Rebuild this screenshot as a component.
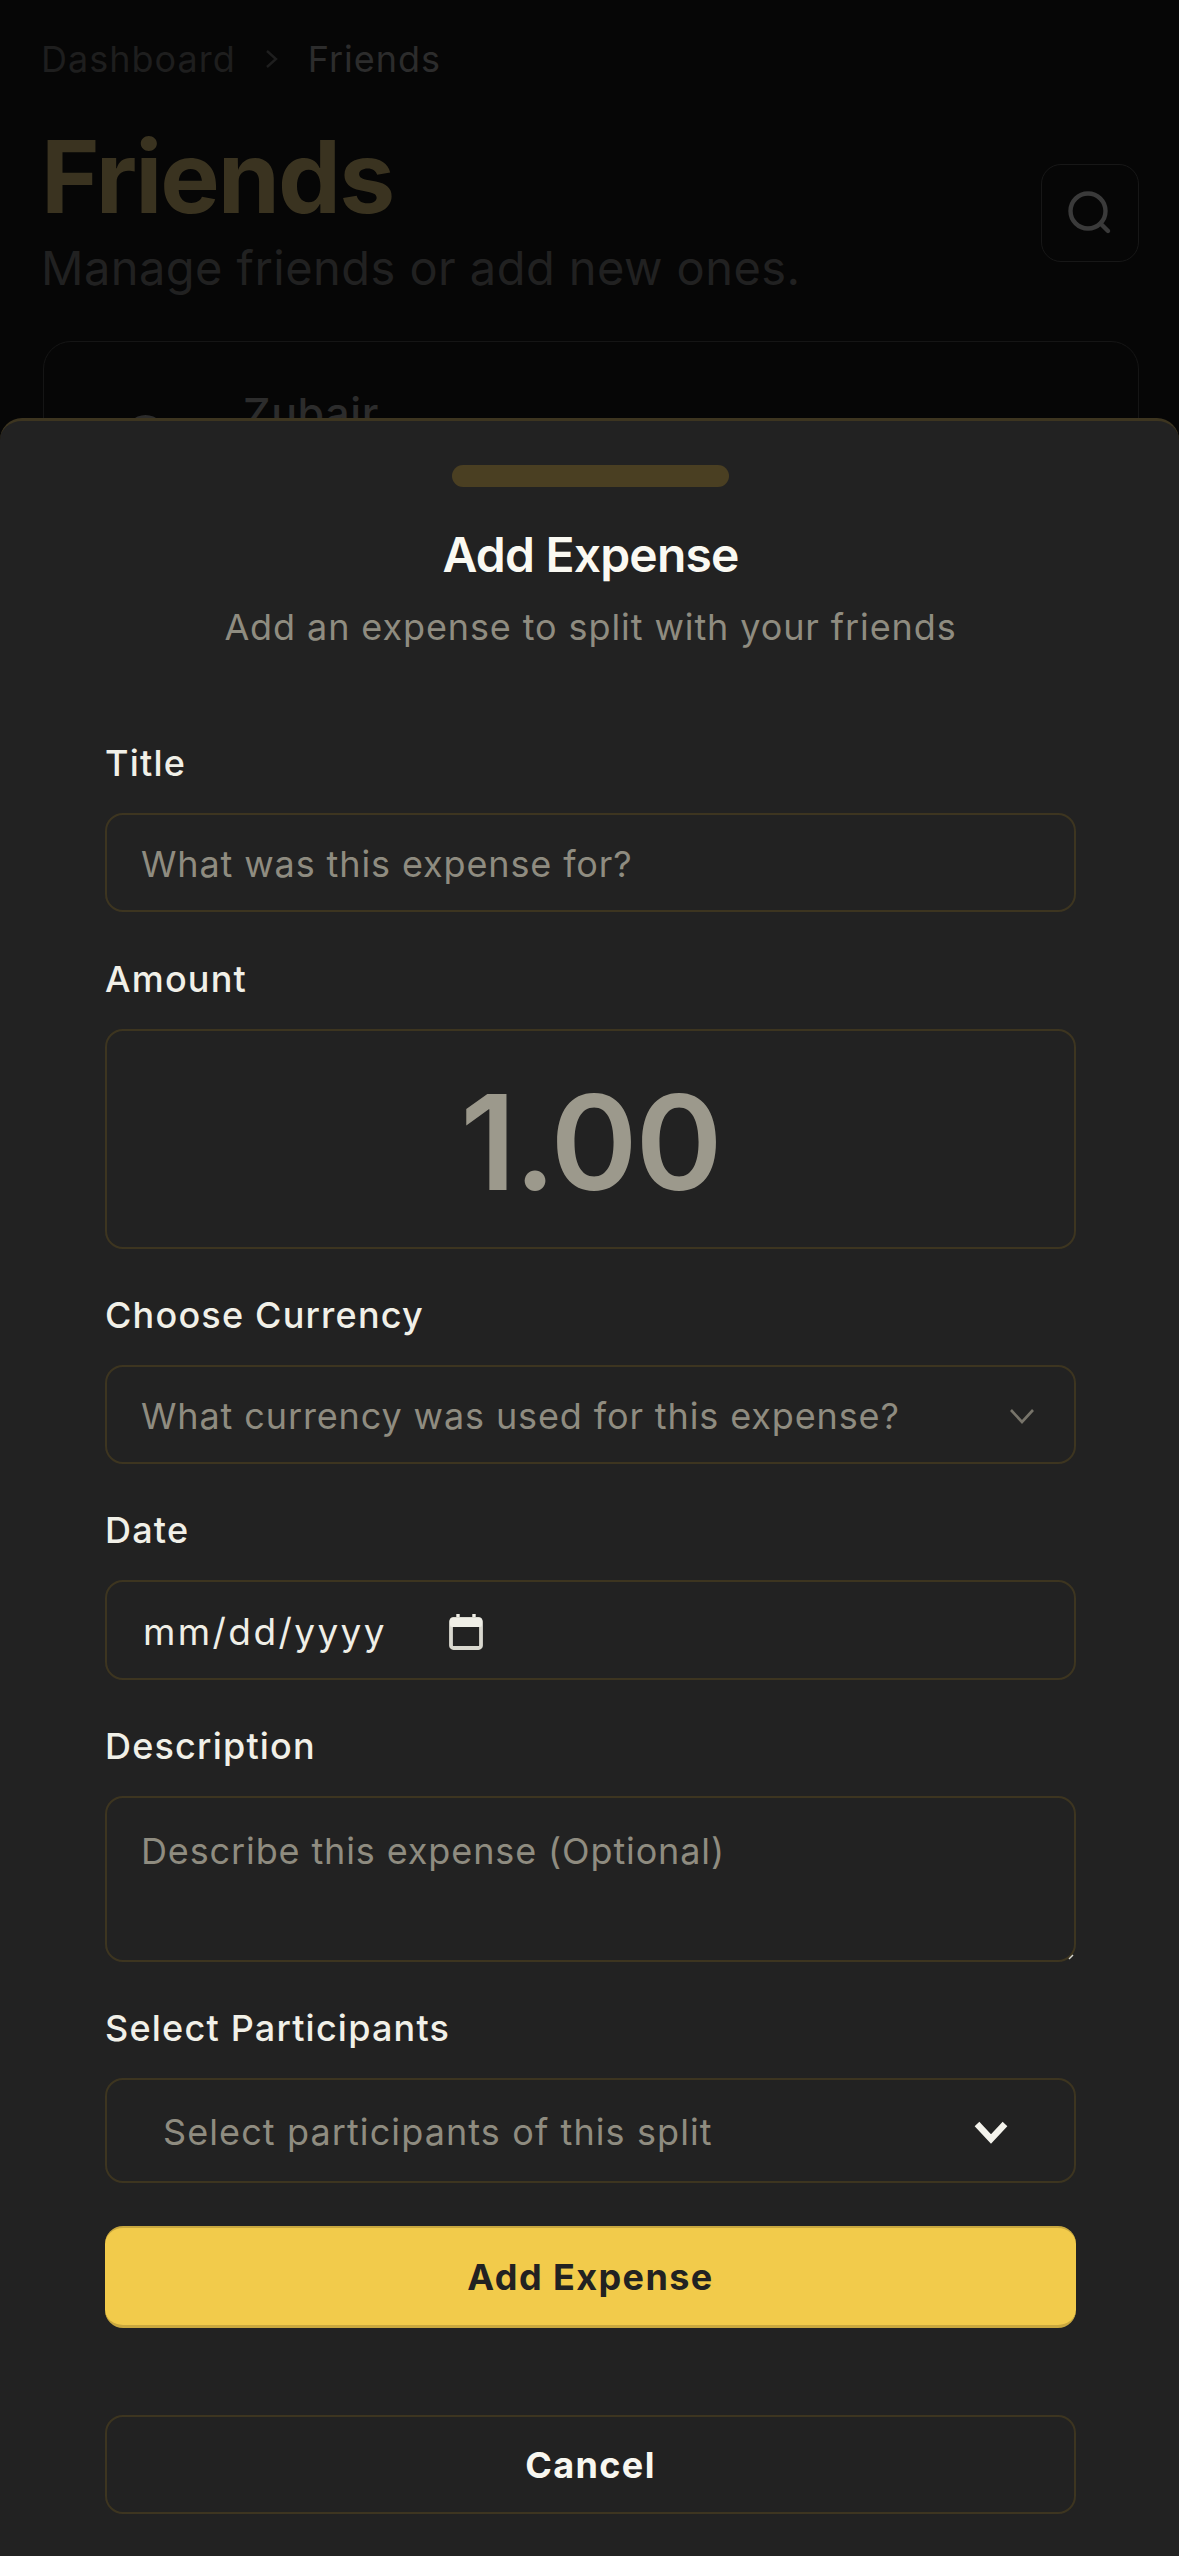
<div class="page">
  <div class="back">
    <nav class="crumbs">
      <span class="c1">Dashboard</span>
      <svg class="cchev" viewBox="0 0 14 20" width="14" height="20"><path d="M2 2l9 8-9 8" fill="none" stroke="#1e1e1e" stroke-width="2.4"/></svg>
      <span class="c2">Friends</span>
    </nav>
    <div class="heading">
      <div>
        <h1>Friends</h1>
        <p>Manage friends or add new ones.</p>
      </div>
      <div class="searchbtn">
        <svg viewBox="0 0 48 48" width="48" height="48"><circle cx="22" cy="22" r="17.5" fill="none" stroke="#3a3a3a" stroke-width="4.4"/><path d="M35 35l7 7" stroke="#3a3a3a" stroke-width="4.4" stroke-linecap="round"/></svg>
      </div>
    </div>
    <div class="card">
      <div class="avatar"></div>
      <div class="name">Zubair</div>
    </div>
  </div>

  <section class="sheet">
    <div class="handle"></div>
    <h2>Add Expense</h2>
    <p class="sub">Add an expense to split with your friends</p>

    <div class="form">
      <div class="field">
        <div class="label">Title</div>
        <div class="box input"><span class="ph">What was this expense for?</span></div>
      </div>
      <div class="field first-gap">
        <div class="label">Amount</div>
        <div class="box amount"><span>1.00</span></div>
      </div>
      <div class="field">
        <div class="label">Choose Currency</div>
        <div class="box input between">
          <span class="ph">What currency was used for this expense?</span>
          <svg viewBox="0 0 28 18" width="28" height="18"><path d="M3 3l11 12L25 3" fill="none" stroke="#77746a" stroke-width="2.6"/></svg>
        </div>
      </div>
      <div class="field">
        <div class="label">Date</div>
        <div class="box input date">
          <span class="dt">mm/dd/yyyy</span>
          <svg viewBox="0 0 34 38" width="34" height="38"><path d="M9 1v6M25 1v6" stroke="#efeee6" stroke-width="3.4"/><rect x="2" y="6" width="30" height="29" rx="2.5" fill="none" stroke="#d9d8cf" stroke-width="3.8"/><rect x="1" y="5" width="32" height="9" rx="2" fill="#efeee6"/></svg>
        </div>
      </div>
      <div class="field">
        <div class="label">Description</div>
        <div class="box area">
          <span class="ph">Describe this expense (Optional)</span>
          <svg class="grip" viewBox="0 0 6 6" width="6" height="6"><path d="M1 5l4-4" stroke="#d8d8d0" stroke-width="1.4"/></svg>
        </div>
      </div>
      <div class="field">
        <div class="label">Select Participants</div>
        <div class="box multi">
          <span class="ph">Select participants of this split</span>
          <svg viewBox="0 0 36 24" width="36" height="24"><path d="M4 4l14 15L32 4" fill="none" stroke="#f4f3ec" stroke-width="6.4"/></svg>
        </div>
      </div>
      <div class="btn primary">Add Expense</div>
      <div class="btn ghost">Cancel</div>
    </div>
  </section>
</div>

<style>
  :global(body) {
    margin: 0;
    background: #060606;
  }
  .page {
    position: relative;
    width: 1179px;
    height: 2556px;
    overflow: hidden;
    background: #060606;
    font-family: Inter, "Noto Sans", sans-serif;
  }
  .back {
    padding: 38px 40px 0 41px;
  }
  .crumbs {
    display: flex;
    align-items: center;
    gap: 29px;
    height: 42px;
    font-size: 36px;
    letter-spacing: 1px;
  }
  .c1 { color: #1e1e1e; }
  .c2 { color: #2c2c2c; }
  .heading {
    display: flex;
    justify-content: space-between;
    align-items: flex-start;
    margin-top: 42px;
  }
  h1 {
    margin: 0;
    font-size: 100px;
    line-height: 110px;
    font-weight: 700;
    color: #3a3320;
    letter-spacing: -2px;
  }
  .heading p {
    margin: 8px 0 0;
    font-size: 47px;
    line-height: 56px;
    color: #212121;
    letter-spacing: 0.45px;
  }
  .searchbtn {
    width: 98px;
    height: 98px;
    margin-top: 42px;
    border: 1px solid #171717;
    border-radius: 20px;
    box-sizing: border-box;
    display: flex;
    align-items: center;
    justify-content: center;
  }
  .card {
    display: flex;
    align-items: flex-start;
    gap: 77px;
    height: 200px;
    margin: 45px 0 0 2px;
    padding: 46px 0 0 81px;
    border: 1px solid #151515;
    border-radius: 28px;
    box-sizing: border-box;
  }
  .avatar {
    width: 41px;
    height: 41px;
    margin-top: 27px;
    border-radius: 50%;
    background: #2c2c2c;
  }
  .name {
    font-size: 43px;
    line-height: 50px;
    font-weight: 500;
    letter-spacing: 0.6px;
    color: #2c2c2c;
  }

  .sheet {
    position: absolute;
    left: 0;
    right: 0;
    top: 418px;
    bottom: 0;
    box-sizing: border-box;
    padding: 44px 0 0 2px;
    background: #222222;
    border-top: 3px solid #3d3520;
    border-radius: 22px 22px 0 0;
    color: #f1f0e8;
    text-align: center;
  }
  .handle {
    width: 277px;
    height: 22px;
    margin: 0 auto;
    border-radius: 11px;
    background: #4a3f22;
  }
  h2 {
    margin: 41px 0 0;
    font-size: 48px;
    line-height: 54px;
    font-weight: 600;
    letter-spacing: -0.8px;
    color: #faf9f2;
  }
  .sub {
    margin: 23px 0 0;
    font-size: 36px;
    line-height: 44px;
    letter-spacing: 0.9px;
    color: #8f8c80;
  }
  .form {
    margin-top: 91px;
    padding: 0 103px 0 103px;
    display: flex;
    flex-direction: column;
    gap: 43px;
    text-align: left;
  }
  .first-gap { margin-top: 1px; }
  .field {
    display: flex;
    flex-direction: column;
    gap: 29px;
  }
  .label {
    height: 44px;
    line-height: 46px;
    font-size: 36px;
    font-weight: 500;
    letter-spacing: 1.2px;
    color: #f1f0e8;
  }
  .box {
    box-sizing: border-box;
    border: 2px solid #3d3520;
    border-radius: 18px;
    display: flex;
    align-items: center;
  }
  .input {
    height: 99px;
    padding: 3px 38px 0 34px;
  }
  .between { justify-content: space-between; }
  .ph {
    font-size: 36px;
    letter-spacing: 0.88px;
    color: #8f8c80;
  }
  .amount {
    height: 220px;
    padding-top: 5px;
    justify-content: center;
    font-size: 132px;
    font-weight: 600;
    letter-spacing: -2px;
    color: #9c998c;
  }
  .date { gap: 62px; height: 100px; padding-left: 36px; }
  .dt {
    font-size: 37px;
    letter-spacing: 2.4px;
    color: #efeee6;
  }
  .area {
    position: relative;
    height: 166px;
    padding: 31px 34px;
    align-items: flex-start;
  }
  .grip {
    position: absolute;
    right: 0;
    bottom: 0;
  }
  .multi {
    height: 105px;
    padding: 3px 65px 0 56px;
    justify-content: space-between;
  }
  .multi .ph { letter-spacing: 1.1px; }
  .btn {
    box-sizing: border-box;
    border-radius: 18px;
    display: flex;
    align-items: center;
    justify-content: center;
    font-size: 36px;
    font-weight: 700;
    letter-spacing: 1.4px;
  }
  .primary {
    height: 102px;
    background: #f2cb4b;
    border-top: 2px solid #c9a83f;
    border-bottom: 3px solid #c9a83f;
    color: #222222;
  }
  .ghost {
    height: 99px;
    margin-top: 44px;
    border: 2px solid #3d3520;
    color: #f8f7f0;
  }
</style>
